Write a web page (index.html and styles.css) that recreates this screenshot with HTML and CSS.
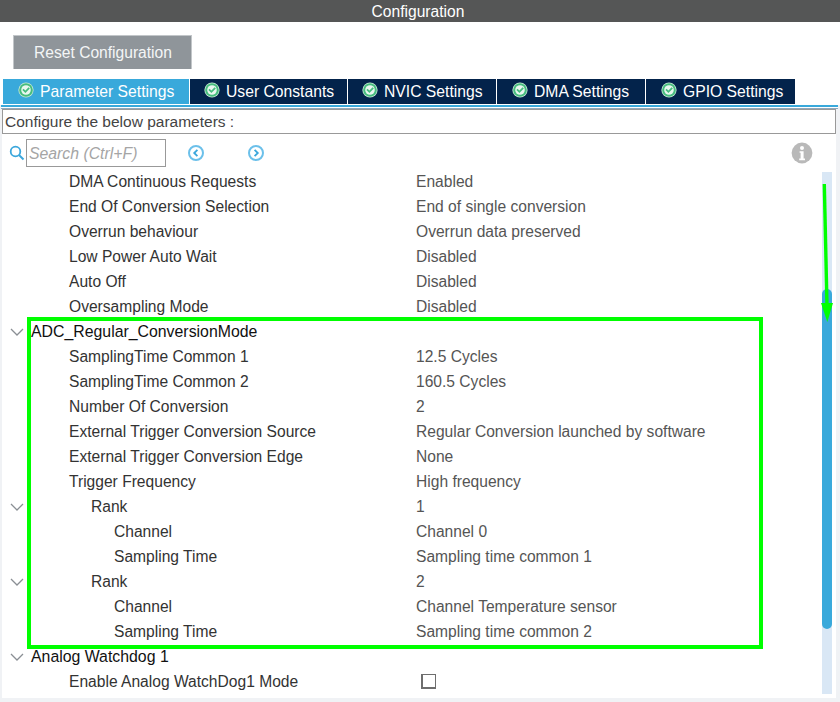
FILE: index.html
```html
<!DOCTYPE html>
<html lang="en">
<head>
<meta charset="utf-8">
<title>Configuration</title>
<link rel="stylesheet" href="styles.css">
</head>
<body>
<svg width="0" height="0" class="defs">
  <defs>
    <symbol id="check" viewBox="0 0 16 16">
      <circle cx="8" cy="8" r="7.6" fill="#c9ead6"/>
      <circle cx="8" cy="8" r="6.8" fill="#46bd7e"/>
      <circle cx="8" cy="8" r="4.8" fill="#e9f7ef"/>
      <path d="M5 7.4 7.4 9.8 11.2 5.8" fill="none" stroke="#46bd7e" stroke-width="1.8"/>
    </symbol>
    <symbol id="chev" viewBox="0 0 14 8">
      <path d="M1 1 7 7 13 1" fill="none" stroke="#8a8f94" stroke-width="1.3"/>
    </symbol>
    <symbol id="nav" viewBox="0 0 18 18">
      <circle cx="9" cy="9" r="7" fill="#fff" stroke="#6cc0ea" stroke-width="2"/>
    </symbol>
  </defs>
</svg>
<div class="page">
  <header class="title">Configuration</header>
  <div class="toolbar"><button class="reset">Reset Configuration</button></div>
  <nav class="tabs">
    <div class="tab active"><svg class="tick"><use href="#check"/></svg>Parameter Settings</div>
    <div class="tab t2"><svg class="tick"><use href="#check"/></svg>User Constants</div>
    <div class="tab t3"><svg class="tick"><use href="#check"/></svg>NVIC Settings</div>
    <div class="tab t4"><svg class="tick"><use href="#check"/></svg>DMA Settings</div>
    <div class="tab t5"><svg class="tick"><use href="#check"/></svg>GPIO Settings</div>
  </nav>
  <div class="rule"></div>
  <div class="panel">
    <div class="caption">Configure the below parameters :</div>
    <div class="search">
      <svg class="mag" viewBox="0 0 16 16"><circle cx="6.5" cy="6.5" r="4.8" fill="none" stroke="#3ba7dc" stroke-width="1.8"/><path d="M10 10 14.5 14.5" stroke="#3ba7dc" stroke-width="2"/></svg>
      <div class="field">Search (Ctrl+F)</div>
      <svg class="nav prev" viewBox="0 0 18 18"><use href="#nav"/><path d="M10.4 5.8 7.2 9 10.4 12.2" fill="none" stroke="#3ba7dc" stroke-width="1.8"/></svg>
      <svg class="nav next" viewBox="0 0 18 18"><use href="#nav"/><path d="M7.6 5.8 10.8 9 7.6 12.2" fill="none" stroke="#3ba7dc" stroke-width="1.8"/></svg>
      <svg class="info" viewBox="0 0 22 22"><circle cx="11" cy="11" r="10.4" fill="#b9b9b9"/><circle cx="11" cy="6" r="2" fill="#fff"/><path d="M8.6 9.2h4v7.4h1.4v1.6H8.2v-1.6h1.4v-5.8h-1z" fill="#fff"/></svg>
    </div>
    <div class="body">
      <div class="list">
        <div class="row"><span class="k l1">DMA Continuous Requests</span><span class="v">Enabled</span></div>
        <div class="row"><span class="k l1">End Of Conversion Selection</span><span class="v">End of single conversion</span></div>
        <div class="row"><span class="k l1">Overrun behaviour</span><span class="v">Overrun data preserved</span></div>
        <div class="row"><span class="k l1">Low Power Auto Wait</span><span class="v">Disabled</span></div>
        <div class="row"><span class="k l1">Auto Off</span><span class="v">Disabled</span></div>
        <div class="row"><span class="k l1">Oversampling Mode</span><span class="v">Disabled</span></div>
        <div class="row"><svg class="chev"><use href="#chev"/></svg><span class="group">ADC_Regular_ConversionMode</span></div>
        <div class="row"><span class="k l1">SamplingTime Common 1</span><span class="v">12.5 Cycles</span></div>
        <div class="row"><span class="k l1">SamplingTime Common 2</span><span class="v">160.5 Cycles</span></div>
        <div class="row"><span class="k l1">Number Of Conversion</span><span class="v">2</span></div>
        <div class="row"><span class="k l1">External Trigger Conversion Source</span><span class="v">Regular Conversion launched by software</span></div>
        <div class="row"><span class="k l1">External Trigger Conversion Edge</span><span class="v">None</span></div>
        <div class="row"><span class="k l1">Trigger Frequency</span><span class="v">High frequency</span></div>
        <div class="row"><svg class="chev"><use href="#chev"/></svg><span class="k l2">Rank</span><span class="v">1</span></div>
        <div class="row"><span class="k l3">Channel</span><span class="v">Channel 0</span></div>
        <div class="row"><span class="k l3">Sampling Time</span><span class="v">Sampling time common 1</span></div>
        <div class="row"><svg class="chev"><use href="#chev"/></svg><span class="k l2">Rank</span><span class="v">2</span></div>
        <div class="row"><span class="k l3">Channel</span><span class="v">Channel Temperature sensor</span></div>
        <div class="row"><span class="k l3">Sampling Time</span><span class="v">Sampling time common 2</span></div>
        <div class="row"><svg class="chev"><use href="#chev"/></svg><span class="group">Analog Watchdog 1</span></div>
        <div class="row"><span class="k l1">Enable Analog WatchDog1 Mode</span><span class="v"><span class="box"></span></span></div>
      </div>
      <div class="track"><div class="thumb"></div></div>
    </div>
  </div>
  <div class="highlight"></div>
  <svg class="arrow" viewBox="0 0 840 702"><path d="M824.3 184 827 306" stroke="#00ff00" stroke-width="3.4" fill="none"/><path d="M821 303H833L827.3 322Z" fill="#00ff00"/></svg>
</div>
</body>
</html>
```

FILE: styles.css
```css
* { box-sizing: border-box; }
html, body { margin: 0; padding: 0; }
body {
  width: 840px;
  height: 702px;
  overflow: hidden;
  background: #f0f2f5;
  font-family: "Liberation Sans", Arial, sans-serif;
  font-size: 15.6px;
}
.defs { position: absolute; }
.page {
  position: relative;
  width: 840px;
  height: 702px;
  display: flex;
  flex-direction: column;
  background: #f0f2f5;
}
.title {
  height: 22px;
  flex: none;
  background: #555656;
  color: #fff;
  text-align: center;
  line-height: 23px;
  padding-right: 4px;
}
.toolbar {
  height: 57px;
  flex: none;
  background: #fff;
  padding: 13px 0 0 13px;
}
.reset {
  display: block;
  width: 179px;
  height: 34px;
  padding: 0 0 0 1px;
  border: 1px solid #c2c6c9;
  border-bottom: 0;
  background: #8f959a;
  color: #f4f5f6;
  font: inherit;
}
.tabs {
  display: flex;
  height: 26px;
  flex: none;
  background: #fff;
  padding-left: 3px;
}
.tab {
  display: flex;
  align-items: center;
  height: 25px;
  width: 149px;
  background: #03234b;
  color: #fff;
  font-size: 15.7px;
  padding-left: 14px;
  border-right: 1px solid #fff;
  white-space: nowrap;
}
.tab.active { width: 187px; background: #39a9db; padding-left: 15px; }
.tab.t2 { width: 158px; padding-left: 14px; }
.tab.t4 { padding-left: 15px; }
.tab.t5 { padding-left: 15px; border-right: 0; }
.tick { width: 16px; height: 16px; margin: -3px 6px 0 0; flex: none; }
.rule {
  height: 4px;
  flex: none;
  margin-left: 1px;
  margin-right: 2px;
  border-top: 2px solid #39a9db;
  border-bottom: 1px solid #8fa9bd;
  background: #fff;
}
.panel {
  height: 589px;
  flex: none;
  margin: 0 4px 0 2px;
  background: #fff;
  display: flex;
  flex-direction: column;
}
.caption {
  height: 25px;
  flex: none;
  border: 1px solid #999;
  line-height: 24px;
  padding-left: 2px;
  color: #444;
  font-size: 15.5px;
}
.search {
  height: 35px;
  flex: none;
  display: flex;
  align-items: center;
  padding-left: 7px;
  padding-top: 3px;
}
.mag { width: 16px; height: 16px; flex: none; }
.field {
  width: 140px;
  height: 28px;
  margin-left: 1px;
  border: 1px solid #999;
  color: #a5a5a5;
  font-size: 15.8px;
  font-style: italic;
  line-height: 27px;
  padding-left: 2px;
  flex: none;
}
.nav { width: 18px; height: 18px; flex: none; }
.prev { margin-left: 21px; }
.next { margin-left: 42px; }
.info { width: 22px; height: 22px; flex: none; margin-left: 526px; }
.body { flex: 1; display: flex; min-height: 0; }
.list { flex: 1; min-width: 0; }
.row {
  position: relative;
  display: flex;
  align-items: center;
  height: 25px;
  white-space: nowrap;
}
.k { color: #333; }
.l1 { width: 414px; padding-left: 67px; }
.l2 { width: 414px; padding-left: 89px; }
.l3 { width: 414px; padding-left: 112px; }
.v { color: #555; }
.group { color: #111; padding-left: 29px; font-size: 15.85px; }
.chev {
  position: absolute;
  left: 8px;
  top: 9px;
  width: 14px;
  height: 8px;
}
.box {
  display: block;
  width: 15px;
  height: 15px;
  margin-left: 5px;
  border: 1px solid #6e6e6e;
  border-bottom-width: 2px;
  border-left-width: 2px;
  background: #fff;
}
.track {
  width: 10px;
  flex: none;
  margin: 3px 4px 4px 0;
  background: #d9e7f5;
  padding-top: 117px;
}
.thumb {
  height: 340px;
  background: #39a9db;
  border-radius: 5px;
}
.highlight {
  position: absolute;
  left: 27px;
  top: 317px;
  width: 736px;
  height: 332px;
  border: 4px solid #00ff00;
  pointer-events: none;
}
.arrow {
  position: absolute;
  left: 0;
  top: 0;
  width: 840px;
  height: 702px;
  pointer-events: none;
}
```
